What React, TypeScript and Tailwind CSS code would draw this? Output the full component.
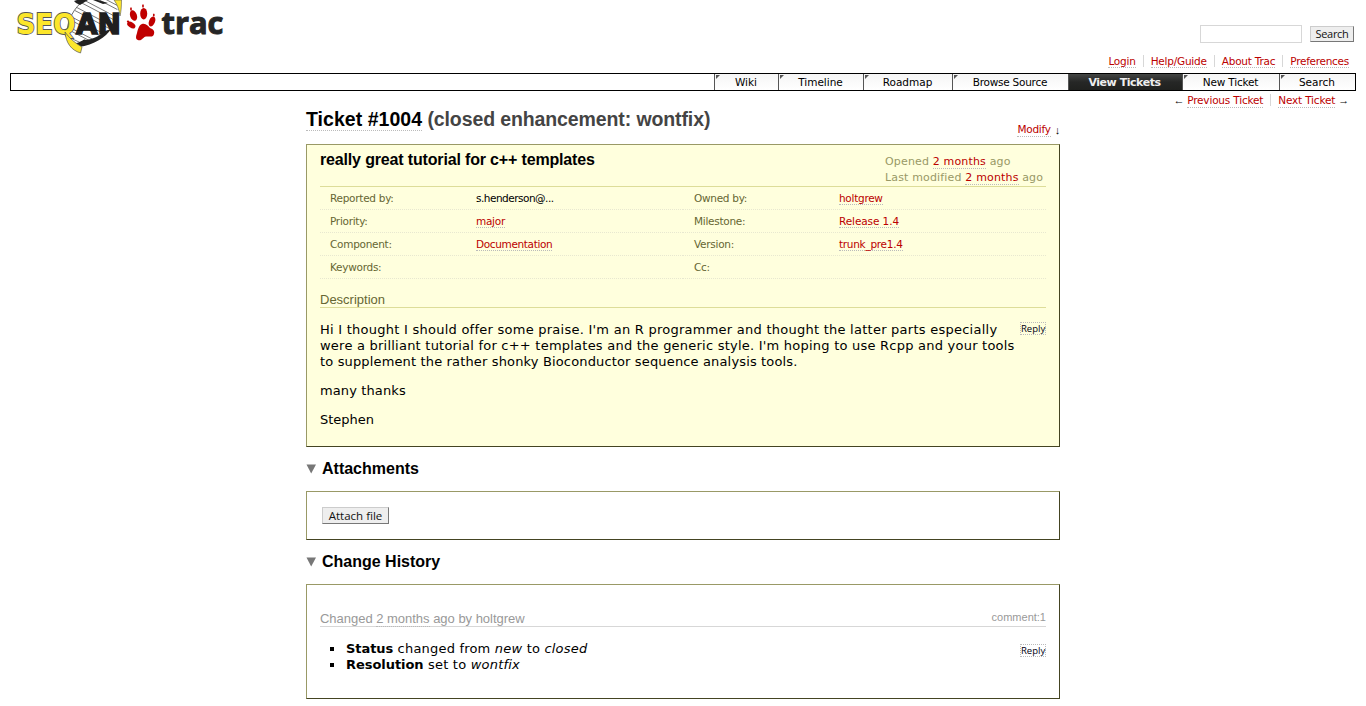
import React from "react";

const link = "text-[#bb0000] border-b border-dotted border-[#bbbbbb]";

function Logo() {
  return (
    <svg width="230" height="56" viewBox="0 0 230 56" className="block">
      <defs>
        <clipPath id="helix">
          <path d="M118 0 C119 14 112 27 102 36 C96 42 89 45 80 46 L70 40 C65 27 71 11 84 0 Z" />
        </clipPath>
      </defs>
      <g clipPath="url(#helix)" stroke="#555" strokeWidth="0.8">
        <path d="M88 -10 L124 9 M86 -7 L122 12 M80 -2 L120 19 M78 1 L118 22 M74 6 L114 27 M72 9 L112 30 M68 15 L106 35 M67 18 L104 38 M65 25 L98 42 M65 28 L96 44 M66 36 L92 48" fill="none" />
      </g>
      <path d="M84 0 C74 8 67 20 67 34" fill="none" stroke="#444" strokeWidth="0.8" />
      <path d="M74 1 L77 0 L88 0 L80 5 L76 3 Z M93 0 L98 0 L108 3 L103 4 Z" fill="#222" />
      <path d="M111 29 C106 37 94 45 79 47 L76 43 C82 42 84 38 86 40 C93 39 100 36 105 31 Z" fill="#222" />
      <path d="M114 0 L121.5 0 C121.5 7 121 12 120 16 C119 9 117 4 114 0 Z" fill="#fce62b" stroke="#555" strokeWidth="0.6" />
      <text x="16.5" y="34" fontFamily="DejaVu Sans, sans-serif" fontWeight="bold" fontSize="29" textLength="59" lengthAdjust="spacingAndGlyphs" fill="#fce62b" stroke="#555" strokeWidth="1.8" paintOrder="stroke">SEQ</text>
      <path d="M65 32 C69 38 75 43 82 47 L80.5 53 C71 50 66 43 65 32 Z" fill="#fce62b" stroke="#555" strokeWidth="0.7" />
      <text x="76" y="34" fontFamily="DejaVu Sans, sans-serif" fontWeight="bold" fontSize="29" textLength="45" lengthAdjust="spacingAndGlyphs" fill="#1f1f1f" stroke="#1f1f1f" strokeWidth="1.6">AN</text>
      <g fill="#c00000">
        <path d="M142 24 C146 23 148 26 150 28 C153 29 155 31 154 34 C153 38 150 36 146 36.5 C143 37 142 41 138.5 40.2 C135 39.5 136 36 137 33 C138 29 139 25 142 24 Z" />
        <ellipse cx="133.5" cy="15.5" rx="3.4" ry="5.4" transform="rotate(-18 133.5 15.5)" />
        <ellipse cx="143.7" cy="13.7" rx="3.5" ry="5.8" />
        <ellipse cx="152" cy="21.5" rx="3" ry="5.2" transform="rotate(22 152 21.5)" />
        <ellipse cx="131.3" cy="25" rx="4.5" ry="2.8" transform="rotate(32 131.3 25)" />
        <ellipse cx="131" cy="9" rx="0.9" ry="1.7" /><ellipse cx="143" cy="6" rx="0.9" ry="1.7" />
        <ellipse cx="153.8" cy="15" rx="0.9" ry="1.5" /><ellipse cx="128" cy="21.5" rx="1.2" ry="1.1" />
      </g>
      <text x="161.5" y="33.5" fontFamily="Open Sans, sans-serif" fontWeight="bold" fontSize="31" textLength="62" lengthAdjust="spacingAndGlyphs" fill="#262626" stroke="#262626" strokeWidth="1">trac</text>
    </svg>
  );
}

function Tab({ label, size, active = false }: { label: string; size: string; active?: boolean }) {
  if (active) {
    return (
      <div className={`${size} h-4 border-l border-[#555] bg-linear-to-b from-[#444644] via-[#262726] to-[#20211f] pr-[2px] text-center text-[11px] leading-[18px] font-bold tracking-[-0.45px] text-[#eeeeee]`}>
        {label}
      </div>
    );
  }
  return (
    <div className={`${size} flex h-4 border-l border-[#555] bg-linear-to-b from-[#f5f5f5] to-white text-[10.5px] leading-[16px]`}>
      <svg width="6" height="6" className="-mr-1.5 block shrink-0"><path d="M1 1H5L1 5Z" fill="#555" /></svg>
      <span className="flex-1 pr-px text-center">{label}</span>
    </div>
  );
}

const box = "border border-t-[#999966] border-l-[#999966] border-r-[#444422] border-b-[#444422]";

function Property({ name, children, right = false }: { name: string; children?: React.ReactNode; right?: boolean }) {
  return (
    <div className="flex h-[23px] border-b border-dotted border-[#e8e8d0] text-[10.5px] leading-[23px] tracking-[-0.28px]">
      <span className={right ? "w-[156px] pl-[11px] text-[#666633]" : "w-[156px] pl-[10px] text-[#666633]"}>{name}</span>
      <span className="pt-[5px] leading-[13px]">{children}</span>
    </div>
  );
}

function Reply() {
  return (
    <span className="mt-px h-[13px] w-[26px] border border-dotted border-[#bbbbbb] text-center font-['Open_Sans',sans-serif] text-[9.5px] leading-[11px] font-medium text-[#000011]">
      Reply
    </span>
  );
}

function Heading({ children }: { children: React.ReactNode }) {
  return (
    <h2 className="flex h-[21px] items-center font-['Liberation_Sans',Arial,sans-serif] text-[16px] font-bold leading-[21px]">
      <svg width="16" height="10" className="block"><path d="M0.5 0.5H10L5.2 9.5Z" fill="#777" /></svg>
      {children}
    </h2>
  );
}

export default function App() {
  return (
    <div className="h-[706px] w-[1366px] overflow-hidden bg-white font-['DejaVu_Sans',Verdana,sans-serif] text-[13px] text-black">
      <header className="flex h-[73px] justify-between">
        <Logo />
        <div className="flex w-[300px] flex-col items-end">
          <div className="mt-[25px] flex h-[18px] items-center gap-2 pr-3">
            <span className="h-[18px] w-[102px] border border-[#d7d7d7]" />
            <button className="h-4 w-11 border border-[#cccccc] border-r-[#777] border-b-[#777] bg-[#eeeeee] font-['Open_Sans',sans-serif] text-[11px] leading-[14px] tracking-[-0.3px] text-[#111]">Search</button>
          </div>
          <nav className="mt-3 flex pr-[17px] text-[10.5px] leading-[12px] tracking-[-0.22px]">
            <span className="border-r border-[#d7d7d7] pr-[7px]"><a className={link}>Login</a></span>
            <span className="border-r border-[#d7d7d7] px-[7px]"><a className={link}>Help/Guide</a></span>
            <span className="border-r border-[#d7d7d7] px-[7px]"><a className={link}>About Trac</a></span>
            <span className="pl-[7px]"><a className={`${link} tracking-[-0.28px]`}>Preferences</a></span>
          </nav>
        </div>
      </header>

      <nav className="mx-[10px] flex h-[18px] justify-end border border-black">
        <Tab label="Wiki" size="w-16" />
        <Tab label="Timeline" size="w-[85px]" />
        <Tab label="Roadmap" size="w-[89px]" />
        <Tab label="Browse Source" size="w-[116px] tracking-[-0.25px]" />
        <Tab label="View Tickets" size="w-[114px]" active />
        <Tab label="New Ticket" size="w-[97px] tracking-[-0.2px]" />
        <Tab label="Search" size="w-[76px]" />
      </nav>

      <div className="flex h-[17px] justify-end pt-[3px] pr-[17px] text-[10.5px] leading-[13px] tracking-[-0.18px]">
        <span className="mr-[3px] font-['Liberation_Sans',Arial,sans-serif] text-[11px]">←</span><a className={link}>Previous Ticket</a>
        <span className="mr-[7px] ml-[7px] h-3 w-px bg-[#d7d7d7]" />
        <a className={link}>Next Ticket</a><span className="ml-[3px] font-['Liberation_Sans',Arial,sans-serif] text-[11px]">→</span>
      </div>

      <main className="ml-[306px] w-[754px]">
        <div className="flex h-9 justify-between">
          <h1 className="font-['Liberation_Sans',Arial,sans-serif] text-[19.5px] leading-[22px] font-bold">
            <a className="inline-block h-[23px] border-b border-dotted border-[#bbbbbb] tracking-[0.03px]">Ticket #1004</a>{" "}
            <span className="tracking-[-0.11px] text-[#444444]">(closed enhancement: wontfix)</span>
          </h1>
          <div className="flex pt-[15px] text-[10.5px] leading-[13px] tracking-[-0.25px]"><a className={`${link} h-[14px]`}>Modify</a><span className="ml-1 pt-px font-['Liberation_Sans',Arial,sans-serif] text-[11px]">↓</span></div>
        </div>

        <section className={`${box} flex h-[303px] flex-col bg-[#ffffdd] pr-[13px] pl-[13px]`}>
          <div className="flex h-[42px] justify-between border-b border-[#dddd99]">
            <h2 className="pt-[5px] font-['Liberation_Sans',Arial,sans-serif] text-[16px] leading-5 font-bold tracking-[-0.16px]">really great tutorial for c++ templates</h2>
            <div className="w-[161px] pt-[9px] text-[11px] leading-4 tracking-[0.16px] whitespace-nowrap text-[#999966]">
              <p>Opened <a className={link}>2 months</a> ago</p>
              <p>Last modified <a className={link}>2 months</a> ago</p>
            </div>
          </div>
          <div className="grid grid-cols-[363px_363px]">
            <Property name="Reported by:"><span className="tracking-[-0.5px]">s.henderson@...</span></Property>
            <Property name="Owned by:" right><a className={link}>holtgrew</a></Property>
            <Property name="Priority:"><a className={link}>major</a></Property>
            <Property name="Milestone:" right><a className={`${link} tracking-[-0.1px]`}>Release 1.4</a></Property>
            <Property name="Component:"><a className={`${link} tracking-[-0.35px]`}>Documentation</a></Property>
            <Property name="Version:" right><a className={link}>trunk_pre1.4</a></Property>
            <Property name="Keywords:" />
            <Property name="Cc:" right />
          </div>
          <h3 className="mt-3 h-[17px] border-b border-[#dddd99] font-['Liberation_Sans',Arial,sans-serif] text-[13px] leading-[18px] text-[#666633]">Description</h3>
          <div className="mt-[13px] flex justify-between">
            <div className="pt-px leading-4 whitespace-nowrap">
              <p className="tracking-[0.25px]">Hi I thought I should offer some praise. I'm an R programmer and thought the latter parts especially</p>
              <p className="tracking-[0.23px]">were a brilliant tutorial for c++ templates and the generic style. I'm hoping to use Rcpp and your tools</p>
              <p className="tracking-[0.15px]">to supplement the rather shonky Bioconductor sequence analysis tools.</p>
              <p className="mt-[13px] tracking-[0.12px]">many thanks</p>
              <p className="mt-[13px]">Stephen</p>
            </div>
            <Reply />
          </div>
        </section>

        <div className="h-11 pt-[11px]"><Heading>Attachments</Heading></div>
        <section className={`${box} h-[49px] pt-[15px] pl-[15px]`}>
          <button className="block h-[17px] w-[67px] border border-[#cccccc] border-r-[#777] border-b-[#777] bg-[#eeeeee] font-['Open_Sans',sans-serif] text-[11.5px] leading-[16px] text-[#111]">Attach file</button>
        </section>
        <div className="h-11 pt-[11px]"><Heading>Change History</Heading></div>

        <section className={`${box} h-[115px] px-[13px] pt-[25px]`}>
          <h3 className="flex h-[17px] justify-between border-b border-[#d7d7d7] font-['Liberation_Sans',Arial,sans-serif] text-[13px] leading-[18px] text-[#999999]">
            <span className="tracking-[-0.02px]">Changed <a className="border-b border-dotted border-[#bbbbbb]">2 months</a> ago by holtgrew</span>
            <span className="text-[11px] leading-[14px]">comment:1</span>
          </h3>
          <div className="mt-[13px] flex justify-between">
            <ul className="pt-px pl-[10px] leading-4">
              <li className="flex items-center"><span className="mr-3 h-1 w-1 bg-black" /><span><b className="tracking-[-0.05px]">Status</b><span className="tracking-[0.2px]"> changed from <i>new</i> to <i>closed</i></span></span></li>
              <li className="flex items-center"><span className="mr-3 h-1 w-1 bg-black" /><span><b className="tracking-[-0.05px]">Resolution</b><span className="tracking-[0.22px]"> set to <i>wontfix</i></span></span></li>
            </ul>
            <div className="flex pt-[3px]"><Reply /></div>
          </div>
        </section>
      </main>
    </div>
  );
}
